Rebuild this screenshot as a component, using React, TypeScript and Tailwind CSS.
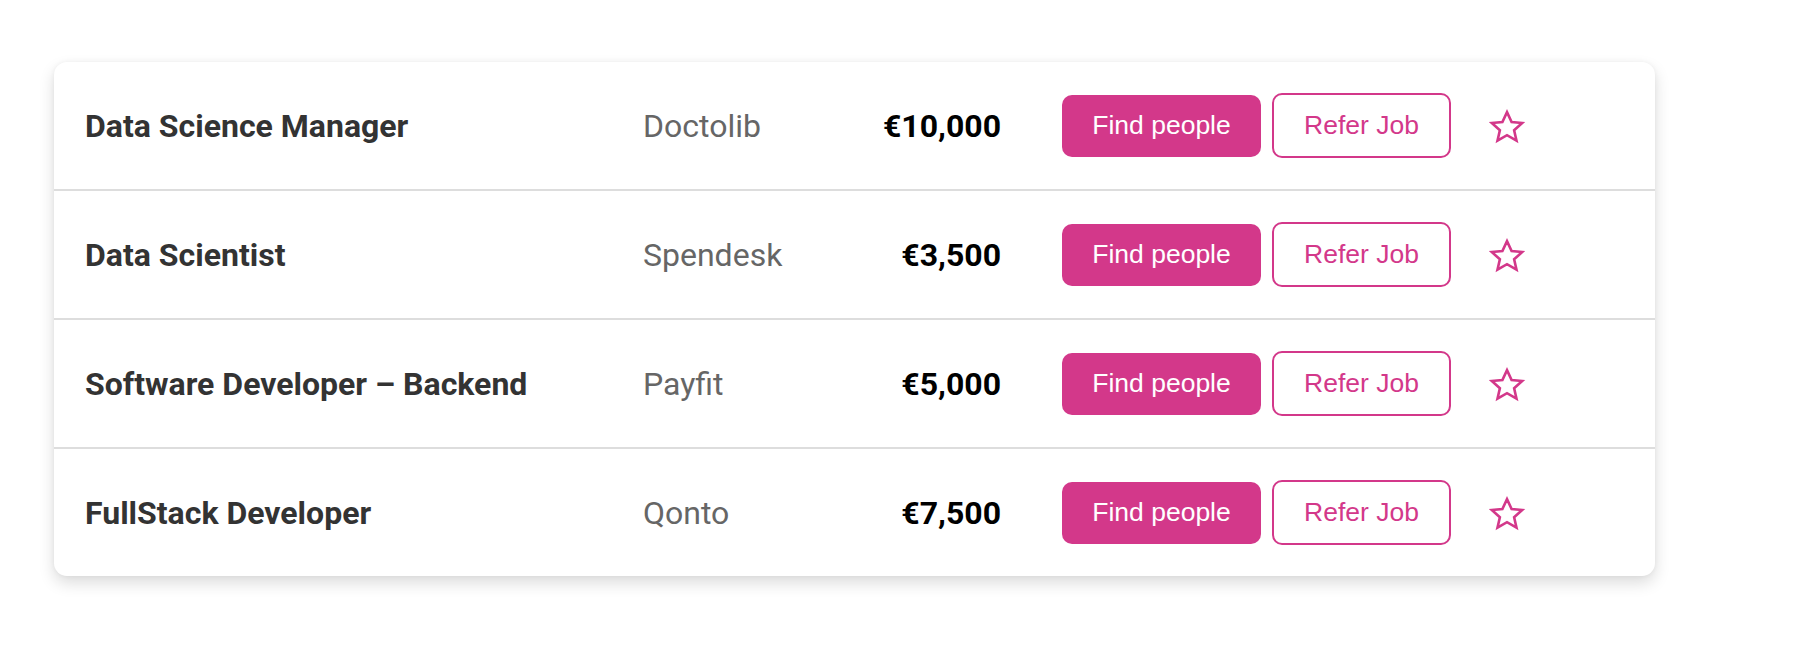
import React from "react";

const jobs = [
  { title: "Data Science Manager", company: "Doctolib", reward: "€10,000" },
  { title: "Data Scientist", company: "Spendesk", reward: "€3,500" },
  { title: "Software Developer – Backend", company: "Payfit", reward: "€5,000" },
  { title: "FullStack Developer", company: "Qonto", reward: "€7,500" },
];

function StarIcon() {
  return (
    <svg width="38" height="38" viewBox="0 0 24 24" fill="none" stroke="#d3388a" strokeWidth="1.65" strokeLinejoin="miter">
      <polygon points="12,2.6 14.9,8.8 21.6,9.5 16.5,14.1 18,20.6 12,17.2 6,20.6 7.5,14.1 2.4,9.5 9.1,8.8" />
    </svg>
  );
}

export default function App() {
  return (
    <div className="min-h-screen bg-white pl-[54px] pt-[62px]">
      <div className="w-[1601px] overflow-hidden rounded-[13px] bg-white shadow-[0_7px_16px_rgba(0,0,0,0.14),0_0_5px_rgba(0,0,0,0.05)]">
        {jobs.map((job, i) => (
          <div
            key={job.title}
            className={
              "flex h-[127px] items-center pl-[31px] font-['Roboto',sans-serif] " +
              (i > 0 ? "border-t-2 border-[#dddddd] box-content" : "")
            }
          >
            <div className="w-[558px] text-[32px] font-bold text-[#333333]">{job.title}</div>
            <div className="w-[201px] text-[32px] text-[#666666]">{job.company}</div>
            <div className="w-[157px] text-right text-[32px] font-bold text-black">{job.reward}</div>

            <div className="ml-[61px] flex items-center">
              <button className="flex h-[62px] w-[199px] items-center justify-center rounded-[10px] bg-[#d3388a] font-['Liberation_Sans',Arial,sans-serif] text-[26.5px] text-white">
                Find people
              </button>
              <button className="ml-[11px] flex h-[65px] w-[179px] items-center justify-center rounded-[10px] border-2 border-[#d3388a] bg-white font-['Liberation_Sans',Arial,sans-serif] text-[26.5px] text-[#d3388a]">
                Refer Job
              </button>
              <div className="ml-[37px] mt-[3px] flex items-center">
                <StarIcon />
              </div>
            </div>
          </div>
        ))}
      </div>
    </div>
  );
}
